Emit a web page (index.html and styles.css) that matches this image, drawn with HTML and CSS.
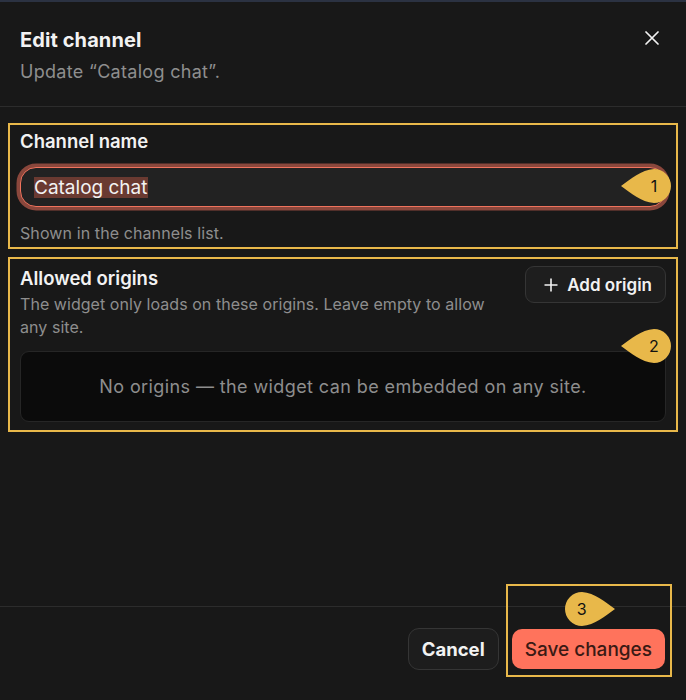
FILE: index.html
```html
<!DOCTYPE html>
<html lang="en">
<head>
  <meta charset="UTF-8">
  <meta name="viewport" content="width=device-width, initial-scale=1.0">
  <title>Edit channel</title>
  <link rel="stylesheet" href="styles.css">
</head>
<body>

<div class="dialog">
  <!-- Header -->
  <div class="dialog-header">
    <div>
      <h2 class="dialog-title">Edit channel</h2>
      <p class="dialog-subtitle">Update “Catalog chat”.</p>
    </div>
    <button class="close-button" aria-label="Close">
      <svg width="14" height="14" viewBox="0 0 14 14">
        <path d="M1 1 L13 13 M13 1 L1 13" stroke="#f2f2f2" stroke-width="1.7" stroke-linecap="round" fill="none"/>
      </svg>
    </button>
  </div>

  <!-- Body -->
  <div class="dialog-body">
    <div class="field-section">
      <label class="field-label">Channel name</label>
      <div class="text-input"><span class="selected">Catalog chat</span></div>
      <p class="field-help">Shown in the channels list.</p>

      <div class="marker marker-left marker-one">
        <svg viewBox="0 0 50 34"><path d="M0 17 C10 10 20 1 33 0 A17 17 0 0 1 33 34 C20 33 10 24 0 17 Z"/></svg>
        <span>1</span>
      </div>
    </div>

    <div class="field-section origins">
      <div class="origins-head">
        <div class="origins-text">
          <label class="field-label">Allowed origins</label>
          <p class="origins-desc">The widget only loads on these origins. Leave empty to allow any site.</p>
        </div>
        <button class="add-button">
          <svg width="14" height="14" viewBox="0 0 14 14">
            <path d="M7 0.5 V13.5 M0.5 7 H13.5" stroke="#f2f2f2" stroke-width="1.6" fill="none"/>
          </svg>
          Add origin
        </button>
      </div>
      <div class="origins-empty">No origins — the widget can be embedded on any site.</div>

      <div class="marker marker-left marker-two">
        <svg viewBox="0 0 50 34"><path d="M0 17 C10 10 20 1 33 0 A17 17 0 0 1 33 34 C20 33 10 24 0 17 Z"/></svg>
        <span>2</span>
      </div>
    </div>
  </div>

  <!-- Footer -->
  <div class="dialog-footer">
    <button class="cancel-button">Cancel</button>
    <div class="save-wrap">
      <button class="save-button">Save changes</button>
      <div class="save-outline"></div>
      <div class="marker marker-right marker-three">
        <svg viewBox="0 0 50 34"><path d="M50 17 C40 10 30 1 17 0 A17 17 0 0 0 17 34 C30 33 40 24 50 17 Z"/></svg>
        <span>3</span>
      </div>
    </div>
  </div>
</div>

</body>
</html>
```

FILE: styles.css
```css
body {
  font-family: 'Inter', 'Noto Sans', sans-serif;
  background-color: #181818;
  color: #f2f2f2;
  margin: 0;
  padding: 0;
}

button {
  font-family: inherit;
  cursor: pointer;
}

.dialog {
  height: 700px;
  display: flex;
  flex-direction: column;
  border-top: 2px solid #2b3242;
  box-sizing: border-box;
}

/* Header */
.dialog-header {
  display: flex;
  justify-content: space-between;
  align-items: flex-start;
  padding: 26px 20px 22px 20px;
  border-bottom: 1px solid #2c2c2c;
}

.dialog-title {
  margin: 0;
  font-size: 20px;
  line-height: 24px;
  font-weight: 700;
  letter-spacing: 0.1px;
}

.dialog-subtitle {
  margin: 8px 0 0;
  font-size: 18px;
  line-height: 24px;
  letter-spacing: 0.3px;
  color: #8e8e8e;
}

.close-button {
  background: none;
  border: none;
  padding: 0;
  margin: 3px 7px 0 0;
  width: 14px;
  height: 14px;
  display: flex;
}

/* Body */
.dialog-body {
  flex: 1;
  padding-top: 16px;
}

.field-section {
  position: relative;
  margin: 0 8px;
  padding: 4px 10px;
  border: 2px solid #e8b84a;
}

.field-label {
  display: block;
  font-size: 18.5px;
  line-height: 24px;
  font-weight: 600;
}

.text-input {
  margin-top: 14px;
  height: 40px;
  box-sizing: border-box;
  display: flex;
  align-items: center;
  padding: 0 13px;
  background-color: #222222;
  border: 1.5px solid #f0735d;
  border-radius: 16px;
  box-shadow: 0 0 0 3.5px #8a473c;
  font-size: 19px;
}

.text-input .selected {
  background-color: #6a3a31;
  line-height: 21px;
}

.field-help {
  margin: 16px 0 0;
  font-size: 16px;
  line-height: 20px;
  letter-spacing: 0.1px;
  color: #8e8e8e;
}

.origins {
  margin-top: 8px;
  padding-top: 7px;
  padding-bottom: 8px;
}

.origins-head {
  display: flex;
  justify-content: space-between;
  align-items: flex-start;
  gap: 16px;
}

.origins-text {
  flex: 1;
}

.origins-desc {
  margin: 3px 0 0;
  font-size: 16px;
  line-height: 23px;
  letter-spacing: 0.05px;
  color: #8e8e8e;
}

.add-button {
  flex-shrink: 0;
  display: flex;
  align-items: center;
  gap: 9px;
  height: 37px;
  padding: 0 13px 0 18px;
  background-color: #1e1e1e;
  border: 1px solid #353535;
  border-radius: 9px;
  color: #f2f2f2;
  font-size: 17px;
  font-weight: 600;
}

.origins-empty {
  margin-top: 12px;
  height: 71px;
  box-sizing: border-box;
  display: flex;
  align-items: center;
  justify-content: center;
  background-color: #0b0b0b;
  border: 1px solid #262626;
  border-radius: 9px;
  font-size: 18px;
  letter-spacing: 0.4px;
  color: #8e8e8e;
}

/* Annotation markers */
.marker {
  position: absolute;
  width: 50px;
  height: 34px;
  display: flex;
  align-items: center;
  color: #111111;
  font-size: 16px;
}

.marker svg {
  position: absolute;
  left: 0;
  top: 0;
  width: 50px;
  height: 34px;
  fill: #e8b84a;
}

.marker span {
  position: relative;
  width: 34px;
  text-align: center;
}

.marker-left span {
  margin-left: 16px;
}

.marker-one {
  right: 5px;
  top: 44px;
}

.marker-two {
  right: 5px;
  top: 70px;
}

.marker-three {
  left: 53px;
  top: -37px;
}

/* Footer */
.dialog-footer {
  display: flex;
  justify-content: flex-end;
  align-items: flex-start;
  gap: 13px;
  padding: 21px 21px 0 0;
  height: 94px;
  box-sizing: border-box;
  border-top: 1px solid #2c2c2c;
}

.cancel-button {
  height: 42px;
  padding: 0 13px;
  background-color: #1d1d1d;
  border: 1px solid #353535;
  border-radius: 11px;
  color: #f2f2f2;
  font-size: 18.5px;
  font-weight: 700;
}

.save-wrap {
  position: relative;
  margin-top: 1px;
}

.save-button {
  height: 40px;
  padding: 0 13px;
  background-color: #ff735c;
  border: none;
  border-radius: 10px;
  color: #3a1a14;
  font-size: 19px;
  font-weight: 500;
}

.save-outline {
  position: absolute;
  left: -6px;
  right: -7px;
  top: -45px;
  bottom: -8px;
  border: 2px solid #e8b84a;
  pointer-events: none;
}
```
